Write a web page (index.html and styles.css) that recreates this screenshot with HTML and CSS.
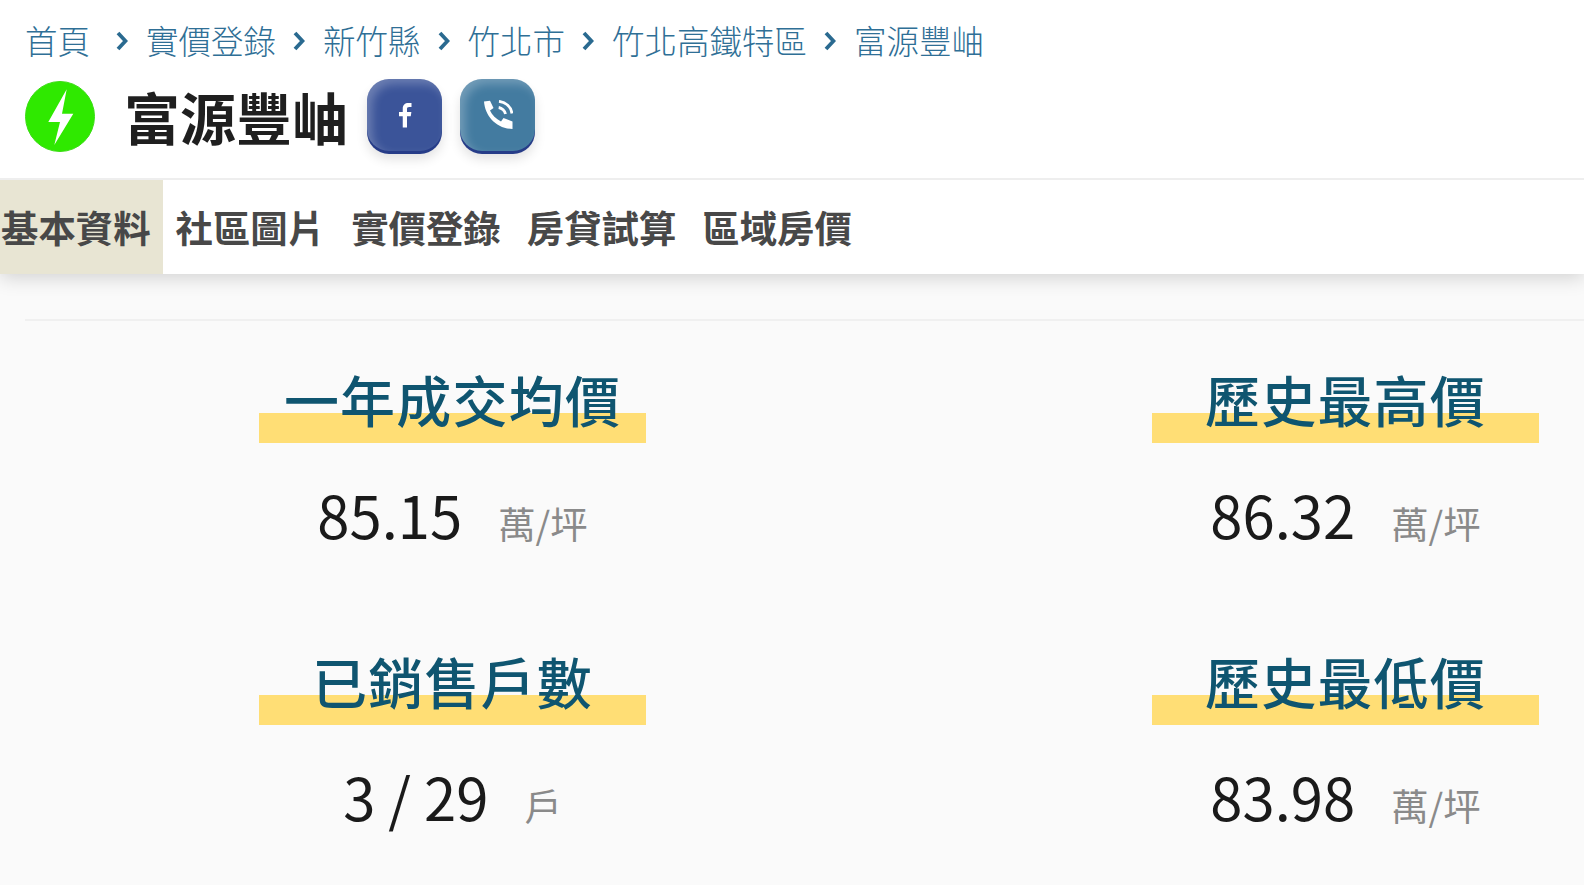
FILE: index.html
```html
<!DOCTYPE html>
<html lang="zh-Hant">
<head>
<meta charset="utf-8">
<title>富源豐岫</title>
<link rel="stylesheet" href="styles.css">
</head>
<body>
<header class="top">
  <nav class="crumbs">
    <a>首頁</a><svg class="chev first" viewBox="0 0 12 20"><path d="M2 2 9.500 10 2 18"/></svg>
    <a>實價登錄</a><svg class="chev" viewBox="0 0 12 20"><path d="M2 2 9.500 10 2 18"/></svg>
    <a>新竹縣</a><svg class="chev" viewBox="0 0 12 20"><path d="M2 2 9.500 10 2 18"/></svg>
    <a>竹北市</a><svg class="chev" viewBox="0 0 12 20"><path d="M2 2 9.500 10 2 18"/></svg>
    <a>竹北高鐵特區</a><svg class="chev" viewBox="0 0 12 20"><path d="M2 2 9.500 10 2 18"/></svg>
    <a>富源豐岫</a>
  </nav>
  <div class="title-row">
    <svg class="amp" viewBox="0 0 70 71"><ellipse cx="35" cy="35.500" rx="34.500" ry="35" fill="#2fe900" stroke="#3cdc16"/><path d="M41.700 8.300 23.300 41 35 41 29.300 64 48.300 32.700 37 32.700Z" fill="#fff"/></svg>
    <h1>富源豐岫</h1>
    <a class="btn fb"><svg viewBox="0 0 24 24" width="30" height="30"><path fill="#fff" d="M13.600 22v-9h3l.5-3.500h-3.500V7.300c0-1 .3-1.700 1.800-1.700h1.800V2.400c-.4 0-1.400-.1-2.600-.1-2.600 0-4.400 1.600-4.400 4.500v2.700h-3V13h3v9z"/></svg></a>
    <a class="btn tel"><svg viewBox="0 0 30 30" width="30" height="30"><path fill="#fff" d="M1 1.500 7 .8l3.500 7.200L7 10.500C9 15 13 19 18 21.500l2.500-3.500 9 3.500V29C13 28.500 2 16 1 1.500z"/><path fill="none" stroke="#fff" stroke-width="2.800" d="M16 1.300C23 2.300 28 7 29 13.500M15.700 7.500C19 8 22 11 22.500 14"/></svg></a>
  </div>
</header>
<nav class="tabs">
  <a class="tab active">基本資料</a>
  <a class="tab">社區圖片</a>
  <a class="tab">實價登錄</a>
  <a class="tab">房貸試算</a>
  <a class="tab">區域房價</a>
</nav>
<main class="content">
  <hr class="rule">
  <section class="stats">
    <div class="stat">
      <h2><span>一年成交均價</span></h2>
      <p class="val"><b>85.15</b><small>萬/坪</small></p>
    </div>
    <div class="stat">
      <h2><span>歷史最高價</span></h2>
      <p class="val"><b>86.32</b><small>萬/坪</small></p>
    </div>
    <div class="stat">
      <h2><span>已銷售戶數</span></h2>
      <p class="val"><b>3 / 29</b><small>戶</small></p>
    </div>
    <div class="stat">
      <h2><span>歷史最低價</span></h2>
      <p class="val"><b>83.98</b><small>萬/坪</small></p>
    </div>
  </section>
</main>
</body>
</html>
```
FILE: styles.css
```css
* { box-sizing: border-box; }
html, body { margin: 0; height: 885px; overflow: hidden; }
body { background: #fafafa; font-family: "Noto Sans CJK TC", sans-serif; color: #1a1a1a; }
.top { position: relative; z-index: 1; background: #fff; height: 180px; padding: 15px 0 0 25px; border-bottom: 2px solid #eee; }
.crumbs { display: flex; align-items: center; height: 50px; color: #2f6f96; font-size: 32.500px; line-height: 50px; font-weight: 300; }
.chev { width: 12px; height: 20px; margin: 2px 18px 0 17px; fill: none; stroke: #2a6a90; stroke-width: 3.800; }
.chev.first { margin-left: 26px; }
.title-row { display: flex; align-items: center; height: 78px; margin-top: 12px; }
.amp { width: 70px; height: 71px; }
h1 { margin: 0 19px 0 29px; font: 700 56px/78px "Noto Sans CJK TC", sans-serif; color: #1f1f1f; }
.btn { display: flex; align-items: center; justify-content: center; width: 75px; height: 72px; margin: 0 18px 3px 0; border-radius: 22px; box-shadow: inset 5px 5px 10px rgba(255,255,255,.25), 0 3px 0 #263c88, 0 8px 12px rgba(0,0,0,.12); }
.fb { background: #3b5499; }
.tel { background: #437ba0; }
.tabs { display: flex; height: 94px; background: #fff; box-shadow: 0 4px 18px rgba(0,0,0,.16); position: relative; }
.tab { display: flex; align-items: center; padding: 0 13px; font: 700 37.400px/94px "Noto Sans CJK TC", sans-serif; color: #484848; }
.tab.active { background: #e8e5d3; padding: 0 12px 0 1px; }
.content { padding-left: 25px; }
.rule { margin: 45px 0 0; border: 0; height: 2px; background: #f0f0f0; }
.stats { display: grid; grid-template-columns: 387px 387px; justify-content: space-between; padding: 45px 45px 0 234px; }
.stat { height: 282px; text-align: center; }
h2 { margin: 0; height: 78px; position: relative; font: 500 55px/64px "Noto Sans CJK TC", sans-serif; color: #0f5570; letter-spacing: 1.200px; }
h2::before { content: ""; position: absolute; left: 0; right: 0; top: 47px; height: 30px; background: #ffde75; }
h2 span { position: relative; }
.val { margin: 30px 0 0; font-size: 58px; line-height: 80px; display: flex; justify-content: center; align-items: baseline; }
.val b { font-weight: 400; color: #1a1a1a; }
.val small { margin-left: 36px; font: 400 37.400px/80px "Noto Sans CJK TC", sans-serif; color: #8a8a8a; }
```
